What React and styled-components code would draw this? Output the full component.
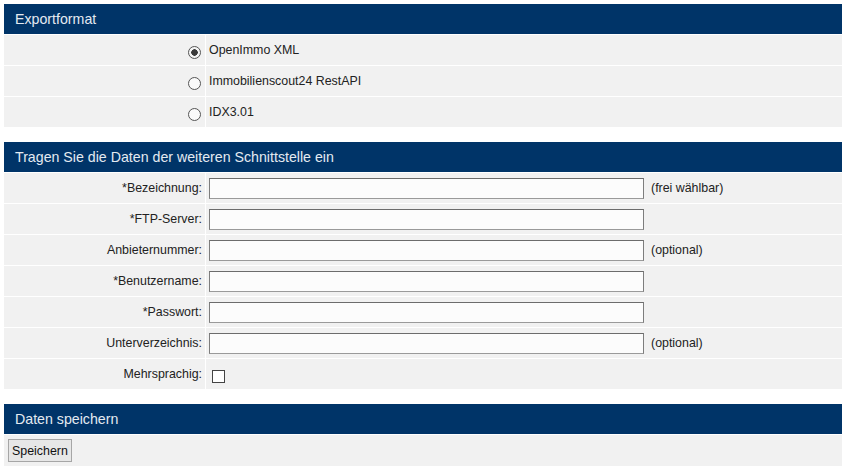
import React from 'react';
import styled, { createGlobalStyle } from 'styled-components';

const GlobalStyle = createGlobalStyle`
html, body {
margin: 0;
padding: 0;
background: #ffffff;
font-family: "Liberation Sans", Arial, sans-serif;
font-size: 12.4px;
color: #222222;
}`

const formats = ['OpenImmo XML', 'Immobilienscout24 RestAPI', 'IDX3.01'];

const fields = [
    { label: '*Bezeichnung:', note: '(frei wählbar)' },
    { label: '*FTP-Server:' },
    { label: 'Anbieternummer:', note: '(optional)' },
    { label: '*Benutzername:' },
    { label: '*Passwort:', type: 'password' },
    { label: 'Unterverzeichnis:', note: '(optional)' },
];

const App = () => {

    return (
        <Page>
        <GlobalStyle />

        <Section>
        <Header>Exportformat</Header>
        {formats.map((f, i) => (
            <Row key={f}>
            <LabelCell><Radio checked={i === 0} /></LabelCell>
            <ValueCell>{f}</ValueCell>
            </Row>
        ))}
        </Section>

        <Section>
        <Header>Tragen Sie die Daten der weiteren Schnittstelle ein</Header>
        {fields.map(f => (
            <Row key={f.label}>
            <LabelCell>{f.label}</LabelCell>
            <ValueCell>
            <Input type={f.type || 'text'} />
            {f.note && <Note>{f.note}</Note>}
            </ValueCell>
            </Row>
        ))}
        <Row>
        <LabelCell>Mehrsprachig:</LabelCell>
        <ValueCell><Checkbox /></ValueCell>
        </Row>
        </Section>

        <Section>
        <Header>Daten speichern</Header>
        <FullRow>
        <Button>Speichern</Button>
        </FullRow>
        </Section>

        </Page>
    )
}

const Page = styled.div`
display: flex;
flex-direction: column;
gap: 15px;
padding: 4px 6px 4px 4px;`

const Section = styled.div`
display: flex;
flex-direction: column;
gap: 1px;`

const Header = styled.div`
height: 30px;
display: flex;
align-items: center;
padding-left: 11px;
background-color: #003468;
color: #e4eaf1;
font-size: 14.2px;`

const Row = styled.div`
display: grid;
grid-template-columns: 201px 1fr;
column-gap: 1px;
height: 30px;`

const LabelCell = styled.div`
display: flex;
align-items: center;
justify-content: flex-end;
padding-right: 3px;
background-color: #f1f1f1;`

const ValueCell = styled.div`
display: flex;
align-items: center;
padding-left: 3px;
background-color: #f1f1f1;`

const FullRow = styled.div`
display: flex;
align-items: center;
height: 31px;
padding-left: 4px;
background-color: #f1f1f1;`

const Radio = styled.span`
width: 13px;
height: 13px;
box-sizing: border-box;
border-radius: 50%;
border: 1px solid #555555;
background: ${p => p.checked
    ? 'radial-gradient(circle, #3a3a3a 0 3px, #f4f4f4 3.5px)'
    : '#fafafa'};
margin: 4px 1px 0 0;`

const Input = styled.input`
box-sizing: border-box;
width: 435px;
height: 21px;
margin: 0;
border: 1px solid #7d7d7d;
border-top-color: #6c6c6c;
border-bottom-color: #9a9a9a;
background: #fcfcfc;
font-family: inherit;
font-size: 12px;`

const Note = styled.span`
margin-left: 7px;`

const Checkbox = styled.span`
width: 13px;
height: 13px;
box-sizing: border-box;
margin: 4px 0 0 3px;
border: 1px solid #444444;
background: #ffffff;`

const Button = styled.button`
height: 23px;
padding: 0 3px;
border: 1px solid #a6a6a6;
border-radius: 0;
background: #e7e7e7;
color: #111111;
font-family: "Liberation Sans", Arial, sans-serif;
font-size: 12.4px;
cursor: pointer;`

export default App;
